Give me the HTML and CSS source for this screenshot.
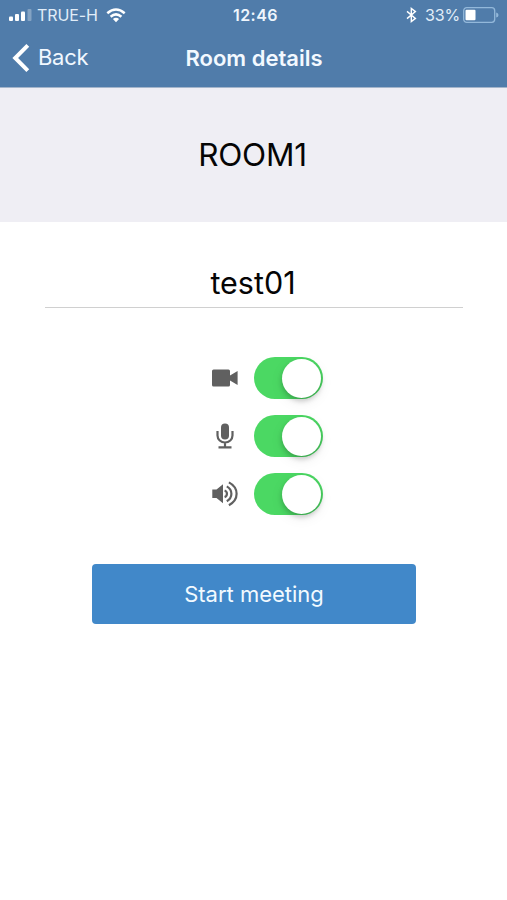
FILE: index.html
```html
<!DOCTYPE html>
<html lang="en">
<head>
<meta charset="utf-8">
<title>Room details</title>
<link rel="stylesheet" href="styles.css">
</head>
<body>
<header class="top">
  <div class="status">
    <div class="status-left">
      <svg class="signal" width="23" height="12" viewBox="0 0 23 12" fill="#fff"><rect x="0" y="7.5" width="4" height="4.5" rx="1"/><rect x="6" y="5" width="4" height="7" rx="1"/><rect x="12" y="2.5" width="4" height="9.5" rx="1"/><rect x="18.5" y="0" width="4" height="12" rx="1" opacity=".3"/></svg>
      <span class="carrier">TRUE-H</span>
      <svg class="wifi" width="20" height="15" viewBox="0 0 20 15"><path d="M1.3 5.3Q10-2.2 18.7 5.3M4.6 8.7Q10 4 15.4 8.7" fill="none" stroke="#fff" stroke-width="2.5"/><path d="M6.9 11Q10 8.3 13.1 11L10 14.2z" fill="#fff"/></svg>
    </div>
    <span class="clock">12:46</span>
    <div class="status-right">
      <svg class="bluetooth" width="11" height="16" viewBox="0 0 11 16" fill="none" stroke="#fff" stroke-width="1.4"><path d="M1 4.4 9.4 11.4 5.3 14.5V1.5L9.4 4.6 1 11.6"/></svg>
      <span class="percent">33%</span>
      <svg class="battery" width="36" height="16" viewBox="0 0 36 16"><rect x=".7" y=".7" width="31" height="14.6" rx="3" fill="none" stroke="#93b8da" stroke-width="1.3"/><rect x="2.5" y="2.7" width="10" height="10.6" rx="1" fill="#fff"/><path d="M33.2 5.5Q35.5 6 35.5 8T33.2 10.5z" fill="#93b8da"/></svg>
    </div>
  </div>
  <nav class="nav">
    <a class="back"><svg width="18" height="30" viewBox="0 0 18 30"><path d="M15.8 2.3 3.2 15 15.8 27.7" fill="none" stroke="#fff" stroke-width="4"/></svg><span class="back-label">Back</span></a>
    <h1 class="title">Room details</h1>
    <span></span>
  </nav>
</header>
<section class="room"><span class="room-name">ROOM1</span></section>
<main class="content">
  <div class="field"><span class="user">test01</span></div>
  <div class="options">
    <div class="option">
      <svg class="icon" width="28" height="28" viewBox="0 0 28 28" fill="#606060"><path d="M2.6 5.5H17.5Q19 5.5 19 7V11.5L26.6 7V21L19 16.5V21Q19 22.5 17.5 22.5H2.6Q1 22.5 1 21V7Q1 5.5 2.6 5.5z"/></svg>
      <span class="switch"><span class="knob"></span></span>
    </div>
    <div class="option">
      <svg class="icon" width="28" height="28" viewBox="0 0 28 28"><rect x="10" y="1.5" width="8" height="16" rx="4" fill="#606060"/><path d="M6.5 9V13.5A7.5 7 0 0 0 21.5 13.5V9M14 20.5V25.3M7.5 25.3H20.5" fill="none" stroke="#606060" stroke-width="2.2"/></svg>
      <span class="switch"><span class="knob"></span></span>
    </div>
    <div class="option">
      <svg class="icon" width="28" height="28" viewBox="0 0 28 28"><path d="M1.3 9.5H5.5L12 4.3V23.3L5.5 18H1.3z" fill="#606060"/><path d="M13.6 10.5A3.5 3.5 0 0 1 13.6 17.1M15.8 6.4Q20.4 9.1 20.4 13.8T15.8 21.2M17.9 2.4Q25.6 6.5 25.6 13.8T17.9 25.2" fill="none" stroke="#606060" stroke-width="2.2"/></svg>
      <span class="switch"><span class="knob"></span></span>
    </div>
  </div>
  <button class="start"><span class="start-label">Start meeting</span></button>
</main>
</body>
</html>
```

FILE: styles.css
```css
* { box-sizing: border-box; }
body {
  margin: 0;
  min-height: 900px;
  background: #fff;
  color: #050505;
  font-family: Inter, "Liberation Sans", sans-serif;
}
svg { display: block; flex: none; }
.top {
  height: 88px;
  background: #507caa;
  border-bottom: 1px solid #a4b5cb;
  color: #fff;
}
.status, .nav {
  display: grid;
  grid-template-columns: 1fr auto 1fr;
  align-items: center;
}
.status { height: 30px; padding: 0 8px 0 9px; font-size: 16px; }
.status-left, .status-right { display: flex; align-items: center; color: #e1edf8; }
.status-right { justify-content: flex-end; }
.carrier { margin-left: 5px; letter-spacing: -.1px; }
.wifi { margin-left: 8px; }
.clock { margin-left: 3px; font-weight: 600; font-size: 16px; letter-spacing: .5px; color: #eff6fd; }
.percent { margin: 0 3px 0 8px; letter-spacing: -.2px; }
.nav { height: 56px; padding: 0 12px; }
.back { display: flex; align-items: center; font-size: 22px; color: #f1f8ff; }
.back-label { margin: 0 0 2px 8px; letter-spacing: -.3px; }
.title { margin: 0 0 1px 1px; font-size: 22px; font-weight: 600; color: #f3f9ff; }
.room {
  height: 134px;
  padding-bottom: 2px;
  display: flex;
  align-items: center;
  justify-content: center;
  background: #efeef4;
}
.room-name { margin-right: 2px; font-size: 31.5px; letter-spacing: -.2px; }
.content { padding: 36px 44px 0 45px; }
.field {
  height: 50px;
  display: flex;
  align-items: center;
  justify-content: center;
  padding: 0 2px 1px 0;
  border-bottom: 1px solid #d0d0d0;
}
.user { font-size: 30.5px; }
.options {
  display: flex;
  flex-direction: column;
  align-items: center;
  gap: 16px;
  margin: 49px 0 49px 25px;
}
.option { display: flex; align-items: center; gap: 15px; }
.switch {
  display: flex;
  justify-content: flex-end;
  width: 69px;
  height: 42px;
  padding: 1.5px;
  border-radius: 21px;
  background: #4bd863;
}
.knob {
  width: 39px;
  height: 39px;
  border-radius: 50%;
  background: #fff;
  box-shadow: 0 3px 5px rgba(0,0,0,.2), 0 4px 14px rgba(0,0,0,.07);
}
.start {
  display: block;
  width: 324px;
  height: 60px;
  margin: 0 auto;
  padding: 0;
  border: 0;
  border-radius: 4px;
  background: #4188c9;
  color: #f2faff;
  font: 22px Inter, "Liberation Sans", sans-serif;
}
```
